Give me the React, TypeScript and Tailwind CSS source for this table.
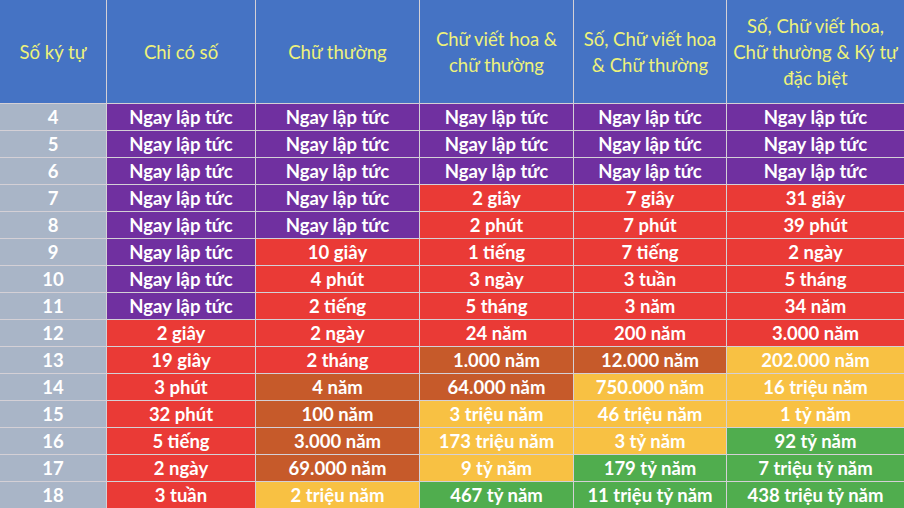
type Tone = "p" | "r" | "b" | "y" | "g";

const toneClass: Record<Tone, string> = {
  p: "bg-[#7030a0]",
  r: "bg-[#ea3a36]",
  b: "bg-[#c65a2a]",
  y: "bg-[#f8c143]",
  g: "bg-[#50ad4e]",
};

const headers = [
  "Số ký tự",
  "Chỉ có số",
  "Chữ thường",
  "Chữ viết hoa & chữ thường",
  "Số, Chữ viết hoa & Chữ thường",
  "Số, Chữ viết hoa, Chữ thường & Ký tự đặc biệt",
];

const NOW = "Ngay lập tức";

// [số ký tự, ...[tone, text] cho từng cột]
const rows: [number, [Tone, string][]][] = [
  [4, [["p", NOW], ["p", NOW], ["p", NOW], ["p", NOW], ["p", NOW]]],
  [5, [["p", NOW], ["p", NOW], ["p", NOW], ["p", NOW], ["p", NOW]]],
  [6, [["p", NOW], ["p", NOW], ["p", NOW], ["p", NOW], ["p", NOW]]],
  [7, [["p", NOW], ["p", NOW], ["r", "2 giây"], ["r", "7 giây"], ["r", "31 giây"]]],
  [8, [["p", NOW], ["p", NOW], ["r", "2 phút"], ["r", "7 phút"], ["r", "39 phút"]]],
  [9, [["p", NOW], ["r", "10 giây"], ["r", "1 tiếng"], ["r", "7 tiếng"], ["r", "2 ngày"]]],
  [10, [["p", NOW], ["r", "4 phút"], ["r", "3 ngày"], ["r", "3 tuần"], ["r", "5 tháng"]]],
  [11, [["p", NOW], ["r", "2 tiếng"], ["r", "5 tháng"], ["r", "3 năm"], ["r", "34 năm"]]],
  [12, [["r", "2 giây"], ["r", "2 ngày"], ["r", "24 năm"], ["r", "200 năm"], ["r", "3.000 năm"]]],
  [13, [["r", "19 giây"], ["r", "2 tháng"], ["b", "1.000 năm"], ["b", "12.000 năm"], ["y", "202.000 năm"]]],
  [14, [["r", "3 phút"], ["b", "4 năm"], ["b", "64.000 năm"], ["y", "750.000 năm"], ["y", "16 triệu năm"]]],
  [15, [["r", "32 phút"], ["b", "100 năm"], ["y", "3 triệu năm"], ["y", "46 triệu năm"], ["y", "1 tỷ năm"]]],
  [16, [["r", "5 tiếng"], ["b", "3.000 năm"], ["y", "173 triệu năm"], ["y", "3 tỷ năm"], ["g", "92 tỷ năm"]]],
  [17, [["r", "2 ngày"], ["b", "69.000 năm"], ["y", "9 tỷ năm"], ["g", "179 tỷ năm"], ["g", "7 triệu tỷ năm"]]],
  [18, [["r", "3 tuần"], ["y", "2 triệu năm"], ["g", "467 tỷ năm"], ["g", "11 triệu tỷ năm"], ["g", "438 triệu tỷ năm"]]],
];

export default function App() {
  return (
    <div className="w-[904px] h-[508px] overflow-hidden bg-white font-['Lato','Open_Sans',sans-serif]">
      <div className="grid grid-cols-[106px_148px_163px_153px_152px_177px] gap-px bg-[#d4d0d6]">
        {/* tiêu đề */}
        {headers.map((h) => (
          <div
            key={h}
            className="h-[103px] flex items-center justify-center bg-[#4573c4] px-1 text-center text-[18.5px] leading-[26px] text-[#eef27a]"
          >
            {h}
          </div>
        ))}

        {rows.map(([n, cells]) => (
          <>
            <div
              key={`n${n}`}
              className="h-[26px] flex items-center justify-center pt-px bg-[#a9b5c7] text-[18.5px] font-bold text-white"
            >
              {n}
            </div>
            {cells.map(([tone, text], i) => (
              <div
                key={`${n}-${i}`}
                className={`h-[26px] flex items-center justify-center pt-px text-[18.5px] font-bold text-white ${toneClass[tone]}`}
              >
                {text}
              </div>
            ))}
          </>
        ))}
      </div>
    </div>
  );
}
